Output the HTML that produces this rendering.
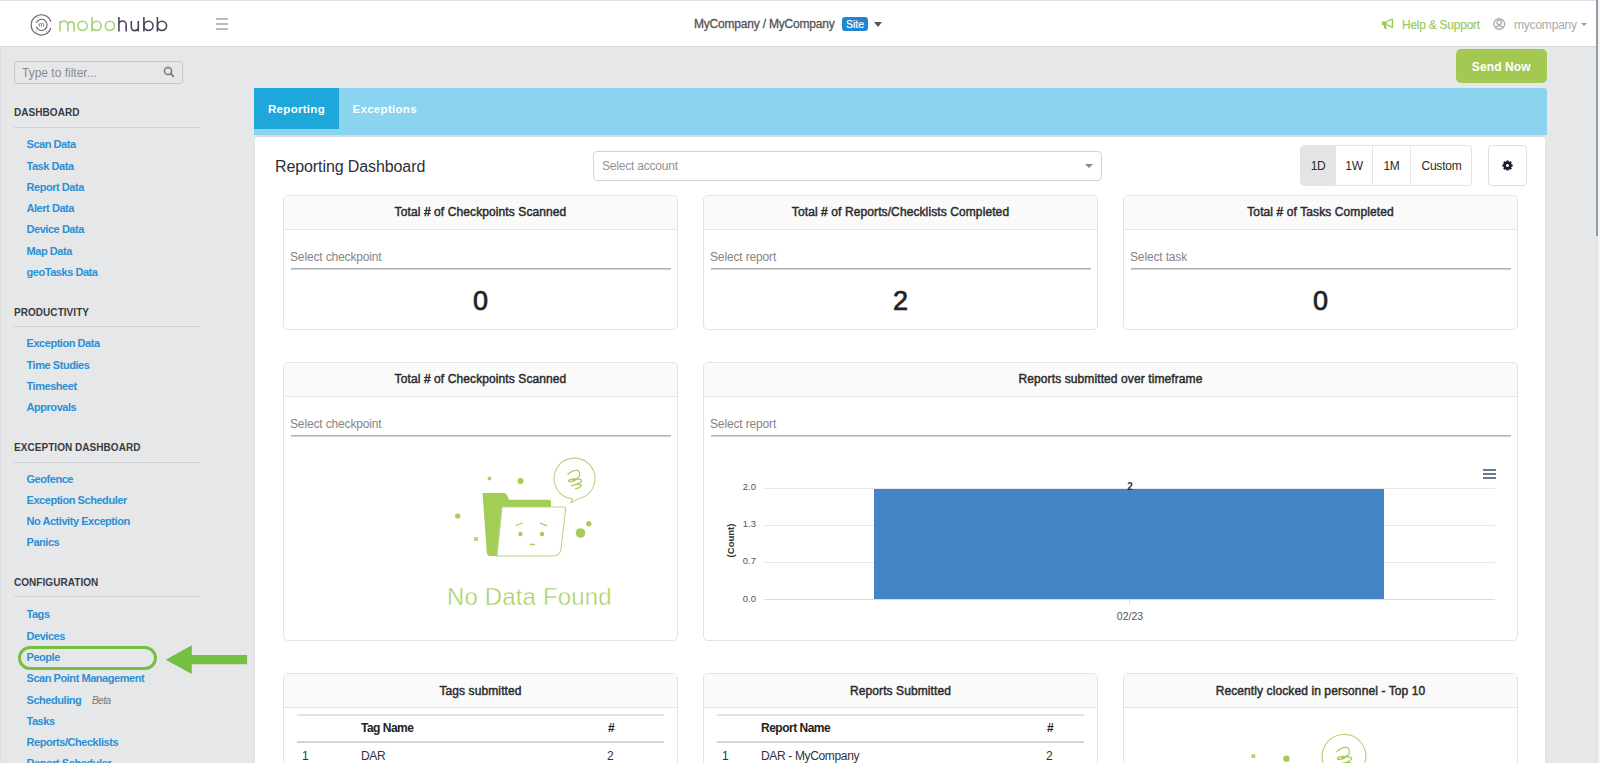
<!DOCTYPE html>
<html><head><meta charset="utf-8">
<style>
*{margin:0;padding:0;box-sizing:border-box}
html,body{width:1600px;height:763px;overflow:hidden}
body{background:#e6e7e9;font-family:"Liberation Sans",sans-serif;position:relative;color:#333}
.a{position:absolute;white-space:nowrap}
#topline{left:0;top:0;width:1600px;height:1px;background:#e0e0e4}
#header{left:0;top:1px;width:1596px;height:46px;background:#fff;border-bottom:1px solid #d8d9db}
.sh{font-size:10px;font-weight:bold;color:#383b42;left:14px;letter-spacing:0.05px;line-height:12px}
.sl{left:14px;width:187px;height:1px;background:#d0d1d3}
.lk{font-size:11px;font-weight:bold;color:#2a90d6;left:26.5px;letter-spacing:-0.45px;line-height:12px}
.card{position:absolute;background:#fff;border:1px solid #e2e2e2;border-radius:5px;overflow:hidden}
.card .hd{position:absolute;left:0;top:0;right:0;height:34px;background:#fafafa;border-bottom:1px solid #e6e6e6;text-align:center;font-size:12px;color:#2b2b2b;line-height:33px;letter-spacing:0.1px;-webkit-text-stroke:0.45px #2b2b2b}
.sel{position:absolute;left:6.5px;right:6.5px;height:2px;background:linear-gradient(#b0b0b0 50%,#d2d2d2 50%)}
.ph{position:absolute;left:6px;font-size:12px;color:#858585;line-height:14px;letter-spacing:-0.15px}
.tb{font-size:12px;font-weight:bold;color:#222;line-height:14px;letter-spacing:-0.5px}
.tr{font-size:12px;color:#333;line-height:14px;letter-spacing:-0.35px}
.big{position:absolute;left:0;right:0;text-align:center;font-size:27px;color:#222;line-height:30px;-webkit-text-stroke:0.7px #222}
</style></head><body>
<div class="a" id="topline"></div>
<div class="a" id="header"></div>

<!-- logo -->
<svg class="a" style="left:0;top:0" width="240" height="46" viewBox="0 0 240 46">
<g fill="none" stroke-width="1.15" stroke="#66616f">
<path d="M50.91 28.02A10.1 10.1 0 1 1 50.91 21.78"/><path d="M36.24 22.98A5.6 5.6 0 1 1 36.24 26.82"/>
</g>
<path d="M39.3 26.7V23.6M39.3 24.6Q39.4 23.5 40.5 23.5Q41.5 23.5 41.5 24.6V26.7M41.5 24.6Q41.6 23.5 42.7 23.5Q43.7 23.5 43.7 24.6V26.7" fill="none" stroke="#66616f" stroke-width="0.75"/>
<circle cx="37.9" cy="17.4" r="0.7" fill="#a3d06c"/><circle cx="36.2" cy="30.9" r="0.7" fill="#a3d06c"/><circle cx="46.4" cy="31.2" r="0.7" fill="#a3d06c"/>
<g fill="none" stroke="#a6d276" stroke-width="1.6">
<path d="M60 31.6V21M60 25A3.95 3.95 0 0 1 67.9 25V31.6M67.9 25A3.1 3.1 0 0 1 74.1 25V31.6"/>
<circle cx="82.6" cy="25.85" r="4.6"/>
<path d="M92 17V31.6"/><circle cx="96.6" cy="25.85" r="4.6"/>
<circle cx="109.9" cy="25.85" r="4.6"/>
</g>
<g fill="none" stroke="#4b4559" stroke-width="1.6">
<path d="M118.9 17V31.6M118.9 24.7A3.65 3.65 0 0 1 126.2 24.7V31.6"/>
<path d="M131.3 21V27.1A3.5 3.5 0 0 0 138.3 27.1M138.3 21V31.6"/>
<path d="M143.9 17V31.6"/><circle cx="148.5" cy="25.85" r="4.6"/>
<path d="M157.4 17V31.6"/><circle cx="162" cy="25.85" r="4.6"/>
</g>
</svg>
<!-- hamburger -->
<div class="a" style="left:215.5px;top:18px;width:12px;height:2px;background:#bbb"></div>
<div class="a" style="left:215.5px;top:23px;width:12px;height:2px;background:#bbb"></div>
<div class="a" style="left:215.5px;top:28px;width:12px;height:2px;background:#bbb"></div>

<div class="a" style="left:694px;top:17px;font-size:12px;color:#555;line-height:14px;letter-spacing:-0.2px;-webkit-text-stroke:0.3px #555">MyCompany / MyCompany</div>
<div class="a" style="left:842px;top:17px;width:26px;height:14px;background:#2185d0;border-radius:3px;color:#fff;font-size:10.5px;line-height:15px;text-align:center;-webkit-text-stroke:0.2px #fff">Site</div>
<div class="a" style="left:874px;top:22px;width:0;height:0;border-left:4.5px solid transparent;border-right:4.5px solid transparent;border-top:5px solid #555"></div>

<!-- help -->
<svg class="a" style="left:1380px;top:18px" width="16" height="12" viewBox="0 0 16 12"><path d="M1.9 3.4h5v3.5h-5z M3.6 6.9h2.4l0.7 4h-2.2z" fill="#9dc85a"/><path d="M7 3.4 L12.4 1.2 V9.4 L7 6.9" fill="none" stroke="#9dc85a" stroke-width="1.3" stroke-linejoin="round"/><path d="M12.6 4.3v1.7" stroke="#9dc85a" stroke-width="1.2"/></svg>
<div class="a" style="left:1402px;top:18px;font-size:12px;color:#9dc85a;line-height:14px;letter-spacing:-0.25px;-webkit-text-stroke:0.15px #9dc85a">Help &amp; Support</div>
<svg class="a" style="left:1492px;top:17px" width="14" height="14" viewBox="0 0 14 14"><defs><clipPath id="uc"><circle cx="7.2" cy="7" r="5"/></clipPath></defs><circle cx="7.2" cy="7" r="5.4" fill="none" stroke="#aaa" stroke-width="1.3"/><g clip-path="url(#uc)"><circle cx="7.2" cy="5.3" r="2.3" fill="none" stroke="#aaa" stroke-width="1.3"/><ellipse cx="7.2" cy="12.2" rx="4.2" ry="3.4" fill="none" stroke="#aaa" stroke-width="1.3"/></g></svg>
<div class="a" style="left:1514px;top:18px;font-size:12px;color:#aaa;line-height:14px;letter-spacing:-0.2px">mycompany</div>
<div class="a" style="left:1581px;top:23px;width:0;height:0;border-left:3px solid transparent;border-right:3px solid transparent;border-top:3.5px solid #999"></div>

<!-- scrollbar -->
<div class="a" style="left:1596px;top:0;width:2px;height:763px;background:#e2e3e5"></div>
<div class="a" style="left:1596px;top:0;width:2px;height:236px;background:#8e9aa6"></div>
<div class="a" style="left:1598px;top:0;width:2px;height:763px;background:#f4f4f4"></div>

<!-- sidebar -->
<div class="a" style="left:0;top:47px;width:1px;height:716px;background:#dcdde0"></div>
<div class="a" style="left:14px;top:61px;width:169px;height:23px;border:1px solid #c6c7c9;border-radius:3px"></div>
<div class="a" style="left:22px;top:66px;font-size:12px;color:#8c8c8c;line-height:14px">Type to filter...</div>
<svg class="a" style="left:163px;top:66px" width="12" height="12" viewBox="0 0 12 12"><circle cx="5" cy="5" r="3.6" fill="none" stroke="#777" stroke-width="1.5"/><path d="M7.6 7.6l2.8 2.8" stroke="#777" stroke-width="1.7" stroke-linecap="round"/></svg>

<div class="a sh" style="top:107px">DASHBOARD</div>
<div class="a sl" style="top:127px"></div>
<div class="a lk" style="top:138px">Scan Data</div>
<div class="a lk" style="top:160px">Task Data</div>
<div class="a lk" style="top:181px">Report Data</div>
<div class="a lk" style="top:202px">Alert Data</div>
<div class="a lk" style="top:223px">Device Data</div>
<div class="a lk" style="top:245px">Map Data</div>
<div class="a lk" style="top:266px">geoTasks Data</div>

<div class="a sh" style="top:307px">PRODUCTIVITY</div>
<div class="a sl" style="top:326px"></div>
<div class="a lk" style="top:337px">Exception Data</div>
<div class="a lk" style="top:359px">Time Studies</div>
<div class="a lk" style="top:380px">Timesheet</div>
<div class="a lk" style="top:401px">Approvals</div>

<div class="a sh" style="top:442px">EXCEPTION DASHBOARD</div>
<div class="a sl" style="top:462px"></div>
<div class="a lk" style="top:473px">Geofence</div>
<div class="a lk" style="top:494px">Exception Scheduler</div>
<div class="a lk" style="top:515px">No Activity Exception</div>
<div class="a lk" style="top:536px">Panics</div>

<div class="a sh" style="top:577px">CONFIGURATION</div>
<div class="a sl" style="top:596px"></div>
<div class="a lk" style="top:608px">Tags</div>
<div class="a lk" style="top:630px">Devices</div>
<div class="a lk" style="top:651px">People</div>
<div class="a lk" style="top:672px">Scan Point Management</div>
<div class="a lk" style="top:694px">Scheduling <span style="font-weight:normal;font-style:italic;color:#777;margin-left:8px;font-size:10px">Beta</span></div>
<div class="a lk" style="top:715px">Tasks</div>
<div class="a lk" style="top:736px">Reports/Checklists</div>
<div class="a lk" style="top:757px">Report Scheduler</div>

<!-- highlight -->
<div class="a" style="left:17.5px;top:645.5px;width:139.5px;height:24.5px;border:3.6px solid #76bf45;border-radius:12.5px"></div>
<svg class="a" style="left:165px;top:644px" width="83" height="31" viewBox="0 0 83 31"><path d="M0.6 15.8L26.8 1.3V10.9H82.1V20.2H26.8V30z" fill="#76bf45"/></svg>

<!-- main -->
<div class="a" style="left:1455.5px;top:49px;width:91.5px;height:34px;background:#a3c953;border-radius:5px;color:#fff;font-size:12px;font-weight:bold;text-align:center;line-height:36px;letter-spacing:0.1px">Send Now</div>

<div class="a" style="left:254px;top:88px;width:1293px;height:47px;background:#8ad4f0;border-radius:0 3px 0 0"></div>
<div class="a" style="left:254px;top:88px;width:85px;height:41px;background:#1ea7db"></div>
<div class="a" style="left:268px;top:102px;font-size:11.5px;font-weight:bold;color:#fff;line-height:14px;letter-spacing:0.3px">Reporting</div>
<div class="a" style="left:352.5px;top:102px;font-size:11.5px;font-weight:bold;color:#fff;line-height:14px;letter-spacing:0.3px">Exceptions</div>

<div class="a" style="left:254px;top:135px;width:1292px;height:640px;background:#fff;border:1px solid #e4e4e6;border-top:2px solid #dcdcde;border-radius:4px 4px 0 0"></div>

<div class="a" style="left:275px;top:158px;font-size:16px;color:#2c2f36;line-height:18px;letter-spacing:-0.1px">Reporting Dashboard</div>

<div class="a" style="left:593px;top:151px;width:509px;height:30px;border:1px solid #d4d4d4;border-radius:4px"></div>
<div class="a" style="left:602px;top:159px;font-size:12px;color:#939393;line-height:14px;letter-spacing:-0.2px">Select account</div>
<div class="a" style="left:1085px;top:164px;width:0;height:0;border-left:4px solid transparent;border-right:4px solid transparent;border-top:4px solid #888"></div>

<!-- button group -->
<div class="a" style="left:1300px;top:145px;width:172px;height:41px;border:1px solid #e3e3e3;border-radius:4px;overflow:hidden">
  <div class="a" style="left:0;top:0;width:34px;height:39px;background:#e3e4e4"></div>
  <div class="a" style="left:34px;top:0;width:1px;height:39px;background:#e6e6e6"></div>
  <div class="a" style="left:71px;top:0;width:1px;height:39px;background:#e6e6e6"></div>
  <div class="a" style="left:109px;top:0;width:1px;height:39px;background:#e6e6e6"></div>
  <div class="a" style="left:0;top:13px;width:34px;text-align:center;font-size:12px;color:#2a2a2a;line-height:14px;letter-spacing:-0.3px">1D</div>
  <div class="a" style="left:35px;top:13px;width:36px;text-align:center;font-size:12px;color:#2a2a2a;line-height:14px;letter-spacing:-0.3px">1W</div>
  <div class="a" style="left:72px;top:13px;width:37px;text-align:center;font-size:12px;color:#2a2a2a;line-height:14px;letter-spacing:-0.3px">1M</div>
  <div class="a" style="left:110px;top:13px;width:61px;text-align:center;font-size:12px;color:#2a2a2a;line-height:14px;letter-spacing:-0.2px">Custom</div>
</div>
<div class="a" style="left:1488px;top:145px;width:39px;height:41px;border:1px solid #e0e0e0;border-radius:4px"></div>
<svg class="a" style="left:1502px;top:160px" width="11" height="11" viewBox="0 0 11 11"><path fill-rule="evenodd" fill="#1c1c2a" d="M9.16 4.16 L10.57 4.37 L10.57 6.63 L9.16 6.84 L9.04 7.14 L9.89 8.29 L8.29 9.89 L7.14 9.04 L6.84 9.16 L6.63 10.57 L4.37 10.57 L4.16 9.16 L3.86 9.04 L2.71 9.89 L1.11 8.29 L1.96 7.14 L1.84 6.84 L0.43 6.63 L0.43 4.37 L1.84 4.16 L1.96 3.86 L1.11 2.71 L2.71 1.11 L3.86 1.96 L4.16 1.84 L4.37 0.43 L6.63 0.43 L6.84 1.84 L7.14 1.96 L8.29 1.11 L9.89 2.71 L9.04 3.86Z M5.5 4 A1.5 1.5 0 1 0 5.5 7 A1.5 1.5 0 1 0 5.5 4Z"/></svg>

<!-- row 1 -->
<div class="card" style="left:283px;top:195px;width:395px;height:135px">
  <div class="hd">Total # of Checkpoints Scanned</div>
  <div class="ph" style="top:54px">Select checkpoint</div>
  <div class="sel" style="top:72px"></div>
  <div class="big" style="top:90px">0</div>
</div>
<div class="card" style="left:703px;top:195px;width:395px;height:135px">
  <div class="hd">Total # of Reports/Checklists Completed</div>
  <div class="ph" style="top:54px">Select report</div>
  <div class="sel" style="top:72px"></div>
  <div class="big" style="top:90px">2</div>
</div>
<div class="card" style="left:1123px;top:195px;width:395px;height:135px">
  <div class="hd">Total # of Tasks Completed</div>
  <div class="ph" style="top:54px">Select task</div>
  <div class="sel" style="top:72px"></div>
  <div class="big" style="top:90px">0</div>
</div>

<!-- row 2 -->
<div class="card" style="left:283px;top:362px;width:395px;height:279px">
  <div class="hd">Total # of Checkpoints Scanned</div>
  <div class="ph" style="top:54px">Select checkpoint</div>
  <div class="sel" style="top:72px"></div>
</div>
<div class="card" style="left:703px;top:362px;width:815px;height:279px">
  <div class="hd">Reports submitted over timeframe</div>
  <div class="ph" style="top:54px">Select report</div>
  <div class="sel" style="top:72px"></div>
</div>

<!-- row 3 -->
<div class="card" style="left:283px;top:673px;width:395px;height:120px">
  <div class="hd" style="line-height:35px">Tags submitted</div>
</div>
<div class="card" style="left:703px;top:673px;width:395px;height:120px">
  <div class="hd" style="line-height:35px">Reports Submitted</div>
</div>
<div class="card" style="left:1123px;top:673px;width:395px;height:120px">
  <div class="hd" style="line-height:35px">Recently clocked in personnel - Top 10</div>
</div>


<svg width="0" height="0" style="position:absolute">
<defs>
<g id="nodata">
  <path d="M42.5 43 L64 43 Q66 43 67 45 L69 49.7 L109 49.7 Q111 49.7 111 51.5 L111 57 L62 57 L58 106 L50 106 Q47 106 46.8 102 Z" fill="#a3cd56"/>
  <path d="M62 57 L124 57 Q126 57 125.6 59 L121 99 Q120 106 112 106 L57 106 Z" fill="#fff" stroke="#b5d77e" stroke-width="1.1"/>
  <path d="M75.5 75.5 L82.5 73 M100 73 L107 75.8 M90 94.5 L95 94.5" stroke="#a3cd56" stroke-width="1.3" fill="none"/>
  <circle cx="80.5" cy="84" r="2.2" fill="#a3cd56"/>
  <circle cx="102" cy="84" r="2.2" fill="#a3cd56"/>
  <circle cx="80.5" cy="31" r="3" fill="#a3cd56"/>
  <circle cx="17.7" cy="66" r="2.6" fill="#a3cd56"/>
  <circle cx="140.5" cy="83" r="4.8" fill="#a3cd56"/>
  <circle cx="148.8" cy="73.7" r="2.6" fill="#a3cd56"/>
  <path d="M48 27 L51 30 M51 27 L48 30 M34.3 87.3 L37.7 90.7 M37.7 87.3 L34.3 90.7" stroke="#a3cd56" stroke-width="1.6"/>
  <path d="M131 52.5 L132.5 49 A20.5 20.5 0 1 1 139.5 48.5 Z" fill="none" stroke="#b5d77e" stroke-width="1.1"/>
  <path d="M127.5 24.5 Q133 19.5 138 20.5 Q140.5 23 139 27 Q136 29.5 129 31.5" fill="none" stroke="#a3cd56" stroke-width="1.1"/>
  <ellipse cx="132" cy="30.2" rx="4.2" ry="1.8" fill="#a3cd56" transform="rotate(-12 132 30.2)"/>
  <ellipse cx="131" cy="30.3" rx="1.3" ry="0.6" fill="#fff" transform="rotate(-12 131 30.3)"/>
  <path d="M135 29.2 Q142.5 28.5 141.5 31.5 Q139 34 131 35.8 Q140 33.2 141.5 35.2 Q141 37.5 135 39" fill="none" stroke="#a3cd56" stroke-width="1.2"/>
</g>
</defs></svg>
<svg class="a" style="left:440px;top:450px" width="170" height="115" viewBox="0 0 170 115"><use href="#nodata"/></svg>
<div class="a" style="left:447px;top:583px;font-size:24px;color:#a3cf5a;line-height:28px;letter-spacing:0.15px;-webkit-text-stroke:0.45px #fff">No Data Found</div>

<!-- chart -->
<div class="a" style="left:764px;top:488px;width:731px;height:1px;background:#e8e8e8"></div>
<div class="a" style="left:764px;top:525px;width:731px;height:1px;background:#e8e8e8"></div>
<div class="a" style="left:764px;top:562px;width:731px;height:1px;background:#e8e8e8"></div>
<div class="a" style="left:764px;top:599px;width:731px;height:1px;background:#dcdcdc"></div>
<div class="a" style="left:874px;top:489px;width:510px;height:110px;background:#4485c5"></div>
<div class="a" style="left:1129px;top:600px;width:1px;height:4px;background:#dcdcdc"></div>
<div class="a" style="left:738px;top:481px;width:18px;text-align:right;font-size:9.5px;color:#555;line-height:11px">2.0</div>
<div class="a" style="left:738px;top:518px;width:18px;text-align:right;font-size:9.5px;color:#555;line-height:11px">1.3</div>
<div class="a" style="left:738px;top:555px;width:18px;text-align:right;font-size:9.5px;color:#555;line-height:11px">0.7</div>
<div class="a" style="left:738px;top:593px;width:18px;text-align:right;font-size:9.5px;color:#555;line-height:11px">0.0</div>
<div class="a" style="left:1110px;top:481px;width:40px;text-align:center;font-size:10px;font-weight:bold;color:#333;line-height:11px">2</div>
<div class="a" style="left:1105px;top:610px;width:50px;text-align:center;font-size:10.5px;color:#555;line-height:12px">02/23</div>
<div class="a" style="left:700px;top:535px;width:60px;text-align:center;font-size:9.5px;font-weight:bold;color:#333;line-height:11px;transform:rotate(-90deg)">(Count)</div>
<div class="a" style="left:1483px;top:469px;width:13px;height:1.5px;background:#6b7b8c"></div>
<div class="a" style="left:1483px;top:473px;width:13px;height:1.5px;background:#6b7b8c"></div>
<div class="a" style="left:1483px;top:477px;width:13px;height:1.5px;background:#6b7b8c"></div>

<!-- tables -->
<div class="a" style="left:297px;top:714px;width:367px;height:2px;background:#e3e3e3"></div>
<div class="a" style="left:297px;top:741px;width:367px;height:2px;background:#d5d5d5"></div>
<div class="a tb" style="left:361px;top:721px">Tag Name</div>
<div class="a tb" style="left:608px;top:721px">#</div>
<div class="a tr" style="left:302px;top:749px">1</div>
<div class="a tr" style="left:361px;top:749px">DAR</div>
<div class="a tr" style="left:607px;top:749px">2</div>

<div class="a" style="left:717px;top:714px;width:367px;height:2px;background:#e3e3e3"></div>
<div class="a" style="left:717px;top:741px;width:367px;height:2px;background:#d5d5d5"></div>
<div class="a tb" style="left:761px;top:721px">Report Name</div>
<div class="a tb" style="left:1047px;top:721px">#</div>
<div class="a tr" style="left:722px;top:749px">1</div>
<div class="a tr" style="left:761px;top:749px">DAR - MyCompany</div>
<div class="a tr" style="left:1046px;top:749px">2</div>

<svg class="a" style="left:1124px;top:708px" width="392" height="55" viewBox="0 0 392 55"><use href="#nodata" transform="translate(76.7 17.8) scale(1.065)"/></svg>
</body></html>
